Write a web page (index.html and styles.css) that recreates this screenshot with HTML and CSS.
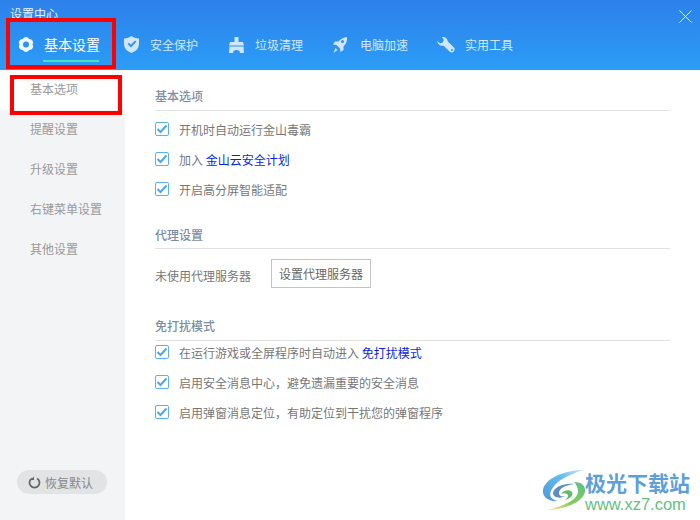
FILE: index.html
```html
<!DOCTYPE html>
<html lang="zh-CN">
<head>
<meta charset="utf-8">
<title>设置中心</title>
<link rel="stylesheet" href="styles.css">
</head>
<body>
<div class="window">
  <header class="header">
    <div class="titlebar">
      <span class="title">设置中心</span>
      <svg class="close" width="13" height="13" viewBox="0 0 13 13"><path d="M.5.5l12 12M12.500.5l-12 12" stroke="#fff" stroke-width="1" fill="none"/></svg>
    </div>
    <nav class="tabs">
      <div class="tab active">
        <svg class="tab-icon" width="17" height="18" viewBox="0 0 17 18"><path fill-rule="evenodd" fill="#eef6ff" d="M15.500 9.500A3.600 3.600 0 0 0 12.200 3.900 3.600 3.600 0 0 0 5.800 3.900 3.600 3.600 0 0 0 2.500 9.500 3.600 3.600 0 0 0 5.800 15.100 3.600 3.600 0 0 0 12.200 15.100 3.600 3.600 0 0 0 15.500 9.500zM9 6.500a3 3 0 1 1 0 6 3 3 0 0 1 0-6z"/></svg>
        <span class="tab-label">基本设置</span>
      </div>
      <div class="tab">
        <svg class="tab-icon" width="17" height="18" viewBox="0 0 17 18"><path fill-rule="evenodd" fill="#cfe6fc" d="M7.500 1C9.500 2.500 12 3.200 15 3.500V9C15 13.500 11.500 16.500 7.500 18 3.500 16.500 0 13.500 0 9V3.500C3 3.200 5.500 2.500 7.500 1zM3.600 9l1.300-1.300 2.100 2.100 4-4.300 1.300 1.200-5.300 5.800z"/></svg>
        <span class="tab-label">安全保护</span>
      </div>
      <div class="tab">
        <svg class="tab-icon" width="17" height="18" viewBox="0 0 17 18"><path fill="#cfe6fc" d="M5.500 2h4v5H14l1 3.500H0L1 7h4.500zM.5 11.500h14L15 18h-4c0-2-1.200-3-3.500-3S4 16 4 18H0z"/></svg>
        <span class="tab-label">垃圾清理</span>
      </div>
      <div class="tab">
        <svg class="tab-icon" width="17" height="18" viewBox="0 0 17 18"><path fill-rule="evenodd" fill="#cfe6fc" d="M13 2C13.500 6 12 9 9.500 11.500V15L6.500 17 6 13.500 2.500 10-1 9.500 1 6.500H4.500C6.500 4 9.500 2.500 13 2zM8.500 5a1.500 1.500 0 1 0 0 3 1.500 1.500 0 0 0 0-3zM1.500 13l2 2-4 3z"/></svg>
        <span class="tab-label">电脑加速</span>
      </div>
      <div class="tab">
        <svg class="tab-icon" width="17" height="18" viewBox="0 0 17 18"><path fill-rule="evenodd" fill="#cfe6fc" d="M3 2.200C6 1.500 8.500 3.500 8.800 6.500L15 12.500C16 13.700 15.700 15.500 14.800 16.600 13.600 17.700 11.800 17.800 10.800 16.800L4.700 10.700C1.500 11.500-1.500 9-2 6L1.200 8.400 3.800 7.500 4.800 4.800zM13 14a1 1 0 1 0 0 2 1 1 0 0 0 0-2z"/></svg>
        <span class="tab-label">实用工具</span>
      </div>
    </nav>
  </header>
  <div class="body">
    <aside class="sidebar">
      <ul class="side-menu">
        <li class="side-item current">基本选项</li>
        <li class="side-item">提醒设置</li>
        <li class="side-item">升级设置</li>
        <li class="side-item">右键菜单设置</li>
        <li class="side-item">其他设置</li>
      </ul>
      <button class="reset">
        <svg width="13" height="13" viewBox="0 0 13 13"><path d="M3.800 2.400a5 5 0 1 0 5.400 0" fill="none" stroke="#666" stroke-width="1.800"/><path d="M6 .5v3.600H2.400z" fill="#666"/></svg>
        <span>恢复默认</span>
      </button>
    </aside>
    <main class="content">
      <section class="section first">
        <h2 class="section-title">基本选项</h2>
        <label class="check-row"><span class="check"><svg width="12" height="10" viewBox="0 0 12 10"><path d="M1.500 5l3 3 6-6.500" fill="none" stroke="#4da6f2" stroke-width="2"/></svg></span>开机时自动运行金山毒霸</label>
        <label class="check-row"><span class="check"><svg width="12" height="10" viewBox="0 0 12 10"><path d="M1.500 5l3 3 6-6.500" fill="none" stroke="#4da6f2" stroke-width="2"/></svg></span>加入&nbsp;<a class="link">金山云安全计划</a></label>
        <label class="check-row"><span class="check"><svg width="12" height="10" viewBox="0 0 12 10"><path d="M1.500 5l3 3 6-6.500" fill="none" stroke="#4da6f2" stroke-width="2"/></svg></span>开启高分屏智能适配</label>
      </section>
      <section class="section proxy-section">
        <h2 class="section-title">代理设置</h2>
        <div class="proxy-row">
          <span class="proxy-text">未使用代理服务器</span>
          <button class="proxy-btn">设置代理服务器</button>
        </div>
      </section>
      <section class="section dnd-section">
        <h2 class="section-title">免打扰模式</h2>
        <label class="check-row"><span class="check"><svg width="12" height="10" viewBox="0 0 12 10"><path d="M1.500 5l3 3 6-6.500" fill="none" stroke="#4da6f2" stroke-width="2"/></svg></span>在运行游戏或全屏程序时自动进入&nbsp;<a class="link">免打扰模式</a></label>
        <label class="check-row"><span class="check"><svg width="12" height="10" viewBox="0 0 12 10"><path d="M1.500 5l3 3 6-6.500" fill="none" stroke="#4da6f2" stroke-width="2"/></svg></span>启用安全消息中心，避免遗漏重要的安全消息</label>
        <label class="check-row"><span class="check"><svg width="12" height="10" viewBox="0 0 12 10"><path d="M1.500 5l3 3 6-6.500" fill="none" stroke="#4da6f2" stroke-width="2"/></svg></span>启用弹窗消息定位，有助定位到干扰您的弹窗程序</label>
      </section>
    </main>
  </div>
  <div class="mark mark-tab"></div>
  <div class="mark mark-side"></div>
  <div class="watermark">
    <svg width="50" height="46" viewBox="0 0 50 46">
      <defs>
        <linearGradient id="wmBlue" x1="0" y1="1" x2="1" y2="0">
          <stop offset="0" stop-color="#4f97d8"/>
          <stop offset=".6" stop-color="#62bce8"/>
          <stop offset="1" stop-color="#cfe8f5"/>
        </linearGradient>
        <linearGradient id="wmGreen" x1="1" y1="0" x2="0" y2="1">
          <stop offset="0" stop-color="#5cc08a"/>
          <stop offset=".55" stop-color="#86cc5a"/>
          <stop offset="1" stop-color="#efe58a"/>
        </linearGradient>
      </defs>
      <path d="M44 1C25 1 5 9 3 21 2 28 9 33 18 32 11 31 8 26 12 20 17 11 30 5 44 1z" fill="url(#wmBlue)"/>
      <path d="M13 24C14 18 24 14 34 15 26 16 19 19 19 24 19 27 22 28 25 27 21 30 13 29 13 24z" fill="#5b8fc0"/>
      <path d="M34 13C42 13 46 17 45 23 43 32 28 40 7 41 24 37 37 31 38 23 38 18 36 15 34 13z" fill="url(#wmGreen)"/>
      <path d="M21 25C23 21 30 20 32 23 34 26 30 30 25 31 28 29 29 26 27 25 25 24 23 24 21 25z" fill="#6ab96a"/>
    </svg>
    <div class="wm-text">
      <div class="wm-cn">极光下载站</div>
      <div class="wm-url">www.xz7.com</div>
    </div>
  </div>
</div>
</body>
</html>
```
FILE: styles.css
```css
* { box-sizing: border-box; }
html, body { margin: 0; padding: 0; }
body {
  font-family: "Noto Sans CJK SC", "Liberation Sans", sans-serif;
  font-size: 12px;
  color: #666;
  background: #fff;
}
.window {
  position: relative;
  width: 700px;
  height: 520px;
  display: flex;
  flex-direction: column;
  overflow: hidden;
}
.header {
  height: 70px;
  flex: none;
  background: linear-gradient(#2e80eb, #2b9df6);
  color: #fff;
}
.titlebar {
  height: 22px;
  display: flex;
  justify-content: space-between;
  padding: 6px 8px 0 10px;
}
.title { font-size: 12px; line-height: 16px; color: #e8f3ff; }
.close { margin-top: 4px; }
.tabs {
  display: flex;
  padding-left: 17px;
  height: 48px;
}
.tab {
  flex: 0 0 105px;
  display: flex;
  align-items: center;
  color: #d3e8fd;
  font-size: 12px;
  padding-bottom: 4px;
}
.tab-icon { flex: none; margin-right: 9px; overflow: visible; }
.tab.active { flex-basis: 107px; color: #fff; font-size: 14px; position: relative; }
.tab.active .tab-icon { margin-right: 10px; }
.tab.active::after {
  content: "";
  position: absolute;
  left: 26px;
  width: 56px;
  bottom: 8px;
  height: 2px;
  background: #3fe6c0;
}
.body { flex: 1; display: flex; min-height: 0; }
.sidebar {
  width: 125px;
  flex: none;
  background: #f3f4f6;
  display: flex;
  flex-direction: column;
  justify-content: space-between;
  padding-bottom: 26px;
}
.side-menu { list-style: none; margin: 0; padding: 0; }
.side-item {
  height: 40px;
  line-height: 38px;
  padding-left: 30px;
  color: #999;
  font-size: 12px;
}
.side-item.current { background: #fff; }
.reset {
  align-self: flex-start;
  margin-left: 17px;
  width: 90px;
  height: 24px;
  border: 0;
  border-radius: 12px;
  background: #e2e3e5;
  color: #888;
  font: inherit;
  display: flex;
  align-items: center;
  justify-content: flex-start;
  gap: 4px;
  padding: 0 0 0 11px;
}
.content { flex: 1; padding: 0 30px; min-width: 0; }
.section-title {
  margin: 0;
  height: 23px;
  line-height: 17px;
  font-size: 12px;
  font-weight: 500;
  color: #7d8ea3;
  border-bottom: 1px solid #e2e2e2;
}
.first { padding-top: 17px; }
.first .section-title { height: 24px; }
.check-row {
  display: flex;
  align-items: center;
  height: 30px;
  color: #777;
}
.first .section-title + .check-row { margin-top: 3px; }
.check {
  flex: none;
  width: 14px;
  height: 14px;
  margin-right: 10px;
  border: 1px solid #5ab0f5;
  border-radius: 2px;
  display: flex;
  align-items: center;
  justify-content: center;
}
.link { color: #0a1fe6; }
.proxy-section { margin-top: 22px; }
.proxy-row { display: flex; align-items: flex-start; margin-top: 10px; }
.proxy-text { width: 116px; color: #777; line-height: 17px; padding-top: 8px; }
.proxy-btn {
  width: 100px;
  height: 29px;
  background: #fff;
  border: 1px solid #c4c4c4;
  color: #666;
  font: inherit;
  padding: 0;
}
.dnd-section { margin-top: 29px; }
.dnd-section .section-title { height: 24px; }
.dnd-section .section-title + .check-row { margin-top: -4px; }
.mark { position: absolute; border: 4px solid #f00; pointer-events: none; }
.mark-tab { left: 6px; top: 18px; width: 110px; height: 51px; }
.mark-side { left: 10px; top: 75px; width: 112px; height: 40px; }
.watermark {
  position: absolute;
  left: 540px;
  top: 464px;
  width: 160px;
  height: 56px;
  display: flex;
}
.watermark svg { margin-top: 5px; flex: none; }
.wm-text { margin-left: -5px; padding-top: 6px; }
.wm-cn {
  font-size: 21px;
  line-height: 24px;
  font-weight: 700;
  color: #5d9fd8;
  white-space: nowrap;
}
.wm-url {
  font-family: "Liberation Sans", sans-serif;
  font-size: 16.5px;
  line-height: 20px;
  color: #63c180;
  white-space: nowrap;
}
```
